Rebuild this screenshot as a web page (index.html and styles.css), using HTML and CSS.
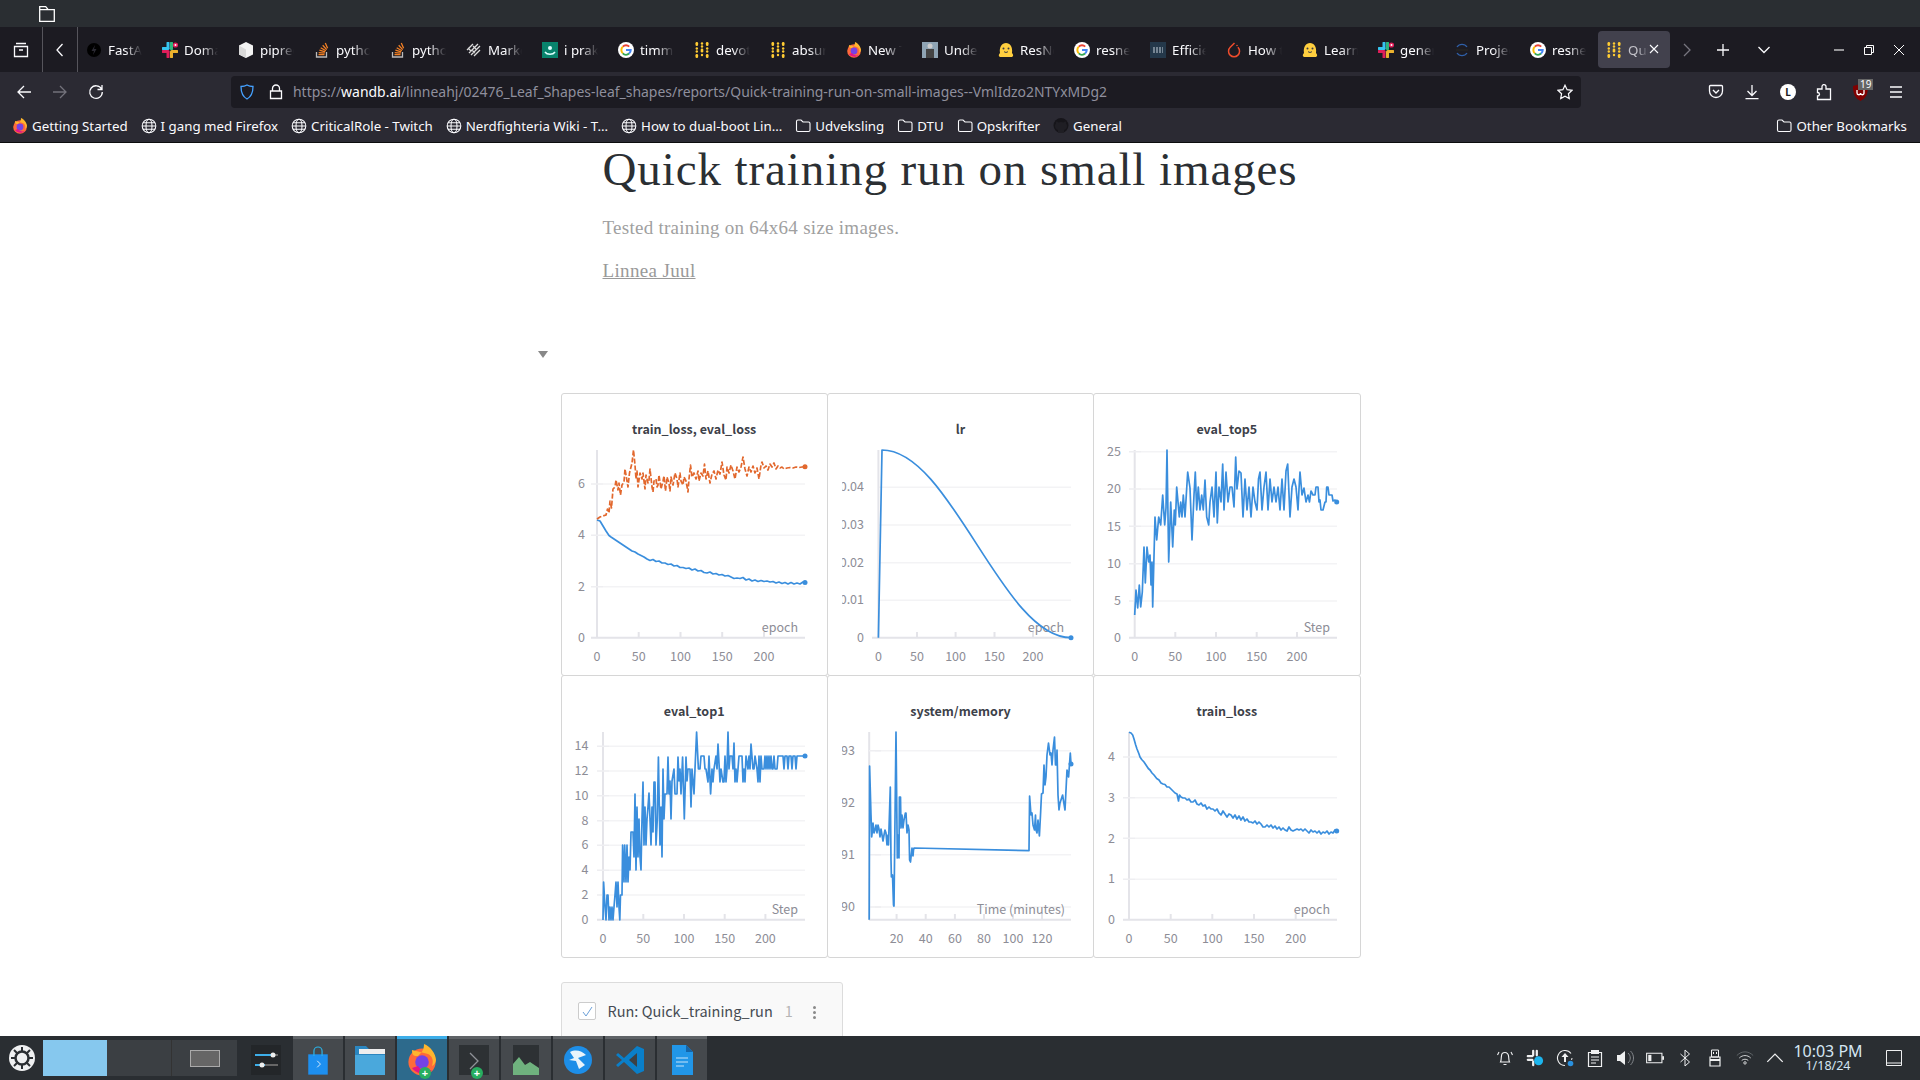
FILE: index.html

```html
<!doctype html>
<html lang="en">
<head>
  <meta charset="utf-8">
  <title>Quick training run on small images</title>
  <link rel="stylesheet" href="styles.css">
</head>
<body>

  <!-- shared favicons -->
  <svg class="defs" width="0" height="0" aria-hidden="true">
    <symbol id="i-wandb" viewBox="0 0 16 16"><g fill="#fc3"><rect x="1.5" y="0" width="2.6" height="4" rx="1.2"/><circle cx="2.8" cy="6.5" r="1.2"/><circle cx="2.8" cy="9.5" r="1.2"/><rect x="1.5" y="12" width="2.6" height="4" rx="1.2"/><circle cx="8" cy="1.5" r="1.2"/><circle cx="8" cy="4.5" r="1.2"/><rect x="6.7" y="6.5" width="2.6" height="4" rx="1.2"/><circle cx="8" cy="13" r="1.2"/><rect x="11.9" y="0" width="2.6" height="4" rx="1.2"/><circle cx="13.2" cy="6.5" r="1.2"/><circle cx="13.2" cy="9.5" r="1.2"/><rect x="11.9" y="12" width="2.6" height="4" rx="1.2"/></g></symbol>
    <symbol id="i-slack" viewBox="0 0 16 16"><path d="M1 6.5h5" stroke="#36c5f0" stroke-width="3" stroke-linecap="round"/><path d="M6 1v5" stroke="#36c5f0" stroke-width="3" stroke-linecap="round"/><path d="M9.500 1v6" stroke="#2eb67d" stroke-width="3" stroke-linecap="round"/><circle cx="13.500" cy="3" r="2.600" fill="#e01e5a"/><circle cx="13.500" cy="3" r="1" fill="#fff"/><path d="M10 9.500h5" stroke="#ecb22e" stroke-width="3" stroke-linecap="round"/><path d="M9.500 10v5" stroke="#ecb22e" stroke-width="3" stroke-linecap="round"/><path d="M6 10v5" stroke="#e01e5a" stroke-width="3" stroke-linecap="round"/><path d="M1 9.500h5" stroke="#e01e5a" stroke-width="3" stroke-linecap="round"/></symbol>
    <symbol id="i-so" viewBox="0 0 16 16"><path d="M2.500 10v5h10v-5" fill="none" stroke="#bcbbbb" stroke-width="1.300"/><path d="M4.500 12.700h6M4.700 10.600l6 .6M5.400 8.200l5.800 1.700M6.700 5.700l5.200 3M8.700 3.300l4 4.300M11.300 1l2.300 5.300" fill="none" stroke="#f48024" stroke-width="1.300"/></symbol>
    <symbol id="i-g" viewBox="0 0 16 16"><circle cx="8" cy="8" r="8" fill="#fff"/><path d="M8 3.300a4.700 4.700 0 0 1 3.200 1.300" fill="none" stroke="#ea4335" stroke-width="2"/><path d="M4.800 4.600A4.700 4.700 0 0 1 8 3.300" fill="none" stroke="#ea4335" stroke-width="2"/><path d="M4.800 4.600a4.700 4.700 0 0 0 0 6.800" fill="none" stroke="#fbbc05" stroke-width="2"/><path d="M4.800 11.400a4.700 4.700 0 0 0 6.300 .2" fill="none" stroke="#34a853" stroke-width="2"/><path d="M11.100 11.600A4.700 4.700 0 0 0 12.700 8H8" fill="none" stroke="#4285f4" stroke-width="2"/></symbol>
    <symbol id="i-fox" viewBox="0 0 16 16"><circle cx="8" cy="9" r="6.800" fill="#ff6a3a"/><path d="M3 3c0 3 1 3 3 3 2-2 3-3 3-6 3 1 6 5 6 8a4 4 0 0 1-2 3c1-3 0-5-2-6z" fill="#ffb52e"/><circle cx="8" cy="9" r="3.400" fill="#7542e5"/><path d="M3 12c2 3 7 4 10 1-3 1-6 0-7-2z" fill="#e31587"/></symbol>
    <symbol id="i-hug" viewBox="0 0 16 16"><path d="M2 15c-2-1-1-3 0-4-1-6 2-10 6-10s7 4 6 10c1 1 2 3 0 4z" fill="#ffcf3f"/><circle cx="5.500" cy="6.500" r="1" fill="#3a3b45"/><circle cx="10.500" cy="6.500" r="1" fill="#3a3b45"/><path d="M6 9.500c1 1.200 3 1.200 4 0" fill="none" stroke="#3a3b45"/></symbol>
    <symbol id="i-globe" viewBox="0 0 16 16"><g fill="none" stroke="#fbfbfe" stroke-width="1.100"><circle cx="8" cy="8" r="6.800"/><ellipse cx="8" cy="8" rx="3" ry="6.800"/><path d="M1.200 8h13.600M2 4.800h12M2 11.200h12"/></g></symbol>
    <symbol id="i-folder" viewBox="0 0 16 16"><path d="M1.500 3.500a1.500 1.500 0 0 1 1.500-1.500h3l2 2h5.500a1.500 1.500 0 0 1 1.500 1.500v6.500a1.500 1.500 0 0 1-1.500 1.500h-10.500a1.500 1.500 0 0 1-1.500-1.500z" fill="none" stroke="#fbfbfe" stroke-width="1.100"/></symbol>
  </svg>

  <!-- window title -->
  <div class="titlebar">
    <svg width="16" height="16" viewBox="0 0 16 16"><path d="M.7.700h6l2.500 3h6.100v11.600H.7zM.7 3.700h8.500" fill="none" stroke="#fff" stroke-width="1.300"/></svg>
  </div>

  <!-- tabs -->
  <div class="tabbar">
    <div class="tabbar-btn first">
      <svg width="16" height="16" viewBox="0 0 16 16"><path d="M3 1.500h10M1.500 4.500h13v10h-13zM6 8h4" fill="none" stroke="#fbfbfe" stroke-width="1.300"/></svg>
    </div>
    <div class="tabbar-btn second">
      <svg width="16" height="16" viewBox="0 0 16 16"><path d="M10.500 2 5 8l5.500 6" fill="none" stroke="#fbfbfe" stroke-width="1.300"/></svg>
    </div>
    <div class="tabs">
      <div class="tab"><svg class="fav" viewBox="0 0 16 16"><circle cx="8" cy="8" r="7" fill="#000"/><path d="M9 3 5.500 9H8l-1 4 3.500-6H8z" fill="#2b2a33"/></svg><span class="tab-label">FastAI</span></div>
      <div class="tab"><svg class="fav"><use href="#i-slack"/></svg><span class="tab-label">Domain</span></div>
      <div class="tab"><svg class="fav" viewBox="0 0 16 16"><path d="M8 0l7 3.500v9L8 16l-7-3.500v-9z" fill="#f3f3f3"/><path d="M8 7.500v8.500l-7-3.500v-9z" fill="#d9d9d9"/></svg><span class="tab-label">pipreqs</span></div>
      <div class="tab"><svg class="fav"><use href="#i-so"/></svg><span class="tab-label">python</span></div>
      <div class="tab"><svg class="fav"><use href="#i-so"/></svg><span class="tab-label">python</span></div>
      <div class="tab"><svg class="fav" viewBox="0 0 16 16"><path d="M1 8l6-6M3 11l9-9M5 13l9-9M8 14l6-6M2 6l3 3M6 8l3 3M7 4l3 3" fill="none" stroke="#ddd" stroke-width="1.300"/></svg><span class="tab-label">Markdown</span></div>
      <div class="tab"><svg class="fav" viewBox="0 0 16 16"><rect width="16" height="16" fill="#08846d"/><circle cx="8" cy="6" r="2" fill="#dff"/><path d="M3 10c2 3 8 3 10 0" fill="none" stroke="#dff" stroke-width="1.500"/></svg><span class="tab-label">i praktik</span></div>
      <div class="tab"><svg class="fav"><use href="#i-g"/></svg><span class="tab-label">timm</span></div>
      <div class="tab"><svg class="fav"><use href="#i-wandb"/></svg><span class="tab-label">devoted</span></div>
      <div class="tab"><svg class="fav"><use href="#i-wandb"/></svg><span class="tab-label">absurd</span></div>
      <div class="tab"><svg class="fav"><use href="#i-fox"/></svg><span class="tab-label">New Tab</span></div>
      <div class="tab"><svg class="fav" viewBox="0 0 16 16"><rect width="16" height="16" fill="#8fa4b4"/><rect x="4" y="7" width="8" height="9" fill="#444"/><circle cx="8" cy="4" r="2.500" fill="#ccc"/></svg><span class="tab-label">Understand</span></div>
      <div class="tab"><svg class="fav"><use href="#i-hug"/></svg><span class="tab-label">ResNet</span></div>
      <div class="tab"><svg class="fav"><use href="#i-g"/></svg><span class="tab-label">resnet</span></div>
      <div class="tab"><svg class="fav" viewBox="0 0 16 16"><rect width="16" height="16" fill="#24384a"/><path d="M3 6h10M3 8h10M3 10h10" stroke="#c5d0da" stroke-dasharray="2 1"/></svg><span class="tab-label">Efficient</span></div>
      <div class="tab"><svg class="fav" viewBox="0 0 16 16"><path d="M8.500 1 4.200 5.300a5.500 5.500 0 1 0 7.700 0" fill="none" stroke="#ee4c2c" stroke-width="1.500"/><circle cx="11" cy="3.500" r=".8" fill="#ee4c2c"/></svg><span class="tab-label">How to</span></div>
      <div class="tab"><svg class="fav"><use href="#i-hug"/></svg><span class="tab-label">Learn</span></div>
      <div class="tab"><svg class="fav"><use href="#i-slack"/></svg><span class="tab-label">general</span></div>
      <div class="tab"><svg class="fav" viewBox="0 0 16 16"><path d="M3 5a6 6 0 0 1 10 0M3 11a6 6 0 0 0 10 0" fill="none" stroke="#2f5fa8" stroke-width="1.300"/><path d="M2 8h12" stroke="#222" stroke-width="2"/></svg><span class="tab-label">Project</span></div>
      <div class="tab"><svg class="fav"><use href="#i-g"/></svg><span class="tab-label">resnet</span></div>
      <div class="tab active"><svg class="fav"><use href="#i-wandb"/></svg><span class="tab-label">Quick</span>
        <svg class="tab-close" width="10" height="10" viewBox="0 0 10 10"><path d="M1 1l8 8M9 1L1 9" stroke="#fbfbfe" stroke-width="1.100"/></svg>
      </div>
    </div>
    <div class="tab-tools">
      <svg class="tool-next" width="12" height="16" viewBox="0 0 12 16"><path d="M3 2l6 6-6 6" fill="none" stroke="#77767f" stroke-width="1.300"/></svg>
      <svg class="tool-plus" width="14" height="14" viewBox="0 0 14 14"><path d="M7 1v12M1 7h12" stroke="#fbfbfe" stroke-width="1.300"/></svg>
      <svg class="tool-list" width="14" height="10" viewBox="0 0 14 10"><path d="M1.500 2 7 7.500 12.500 2" fill="none" stroke="#fbfbfe" stroke-width="1.300"/></svg>
    </div>
    <div class="win-btns">
      <svg width="12" height="12" viewBox="0 0 12 12"><path d="M1 6h10" stroke="#fcfcfc" stroke-width="1.100"/></svg>
      <svg width="12" height="12" viewBox="0 0 12 12"><path d="M1.500 3.500h7v7h-7zM3.500 3.500v-2h7v7h-2" fill="none" stroke="#fcfcfc"/></svg>
      <svg width="12" height="12" viewBox="0 0 12 12"><path d="M1 1l10 10M11 1L1 11" stroke="#fcfcfc"/></svg>
    </div>
  </div>

  <!-- address bar -->
  <div class="navbar">
    <div class="nav-btn"><svg width="16" height="16" viewBox="0 0 16 16"><path d="M15 8H2M8 2 2 8l6 6" fill="none" stroke="#fbfbfe" stroke-width="1.300"/></svg></div>
    <div class="nav-btn"><svg width="16" height="16" viewBox="0 0 16 16"><path d="M1 8h13M8 2l6 6-6 6" fill="none" stroke="#73727b" stroke-width="1.300"/></svg></div>
    <div class="nav-btn"><svg width="16" height="16" viewBox="0 0 16 16"><path d="M13.500 5A6.300 6.300 0 1 0 14.300 8M14 1v4.500H9.500" fill="none" stroke="#fbfbfe" stroke-width="1.300"/></svg></div>
    <div class="urlbar">
      <svg width="16" height="16" viewBox="0 0 16 16"><path d="M8 1c2 1.200 4 1.500 6 1.500 0 6-1.500 10-6 12.500C3.500 12.500 2 8.500 2 2.500 4 2.500 6 2.200 8 1z" fill="none" stroke="#45a1ff" stroke-width="1.300"/></svg>
      <svg class="url-lock" width="14" height="16" viewBox="0 0 14 16"><path d="M3.500 7V4.500a3.500 3.500 0 0 1 7 0V7M1.500 7h11v7.500h-11z" fill="none" stroke="#fbfbfe" stroke-width="1.300"/></svg>
      <span class="url-text">https://<b>wandb.ai</b>/linneahj/02476_Leaf_Shapes-leaf_shapes/reports/Quick-training-run-on-small-images--VmlIdzo2NTYxMDg2</span>
      <svg class="url-star" width="16" height="16" viewBox="0 0 16 16"><path d="M8 1.200l2.100 4.500 4.900.6-3.600 3.400.9 4.900L8 12.200l-4.300 2.400.9-4.900L1 6.300l4.900-.6z" fill="none" stroke="#fbfbfe" stroke-width="1.200"/></svg>
    </div>
    <div class="nav-right">
      <div class="nav-btn"><svg width="16" height="16" viewBox="0 0 16 16"><path d="M2.500 1.500h11a1 1 0 0 1 1 1V7a6.500 6.500 0 0 1-13 0V2.500a1 1 0 0 1 1-1zM5 6l3 3 3-3" fill="none" stroke="#fbfbfe" stroke-width="1.300"/></svg></div>
      <div class="nav-btn"><svg width="16" height="16" viewBox="0 0 16 16"><path d="M8 1v10M3.500 7 8 11.500 12.500 7M1.500 14.700h13" fill="none" stroke="#fbfbfe" stroke-width="1.300"/></svg></div>
      <div class="nav-btn"><span class="avatar">L</span></div>
      <div class="nav-btn"><svg width="16" height="18" viewBox="0 0 16 18"><path d="M1.500 6h4.500V3.500a2 2 0 0 1 3.500-1.200 2 2 0 0 1 .5 1.200V6h4.500v10.500H1.500v-3.500a2 2 0 0 0 2-1.700 2 2 0 0 0-2-1.800z" fill="none" stroke="#fbfbfe" stroke-width="1.300"/></svg></div>
      <div class="nav-btn ublock">
        <svg width="15" height="17" viewBox="0 0 15 17"><path d="M7.500 0 15 2c0 8-2 12-7.500 15C2 14 0 10 0 2z" fill="#800000"/><path d="M4 6v3a1.700 1.700 0 0 0 3.500 0 1.700 1.700 0 0 0 3.500 0V6" fill="none" stroke="#fff" stroke-width="1.300"/></svg>
        <span class="badge">19</span>
      </div>
      <div class="nav-btn"><svg width="16" height="16" viewBox="0 0 16 16"><path d="M2 3h12M2 8h12M2 13h12" stroke="#fbfbfe" stroke-width="1.300"/></svg></div>
    </div>
  </div>

  <!-- bookmarks -->
  <div class="bookmarks">
    <span class="bm"><svg class="fav"><use href="#i-fox"/></svg>Getting Started</span>
    <span class="bm"><svg class="fav"><use href="#i-globe"/></svg>I gang med Firefox</span>
    <span class="bm"><svg class="fav"><use href="#i-globe"/></svg>CriticalRole - Twitch</span>
    <span class="bm"><svg class="fav"><use href="#i-globe"/></svg>Nerdfighteria Wiki - T...</span>
    <span class="bm"><svg class="fav"><use href="#i-globe"/></svg>How to dual-boot Lin...</span>
    <span class="bm"><svg class="fav"><use href="#i-folder"/></svg>Udveksling</span>
    <span class="bm"><svg class="fav"><use href="#i-folder"/></svg>DTU</span>
    <span class="bm"><svg class="fav"><use href="#i-folder"/></svg>Opskrifter</span>
    <span class="bm"><svg class="fav" viewBox="0 0 16 16"><circle cx="8" cy="7.500" r="7.500" fill="#16151a"/><path d="M5 15v-3c-2-.5-3-2-3-4 0-1 .5-2 1-2.500 0-1 0-1.500.3-2 1 0 1.700.5 2.200 1a7 7 0 0 1 5 0c.5-.5 1.200-1 2.200-1 .3.500.3 1 .3 2 .5.500 1 1.500 1 2.500 0 2-1 3.500-3 4v3z" fill="#1f1e24"/></svg>General</span>
    <span class="bm other"><svg class="fav"><use href="#i-folder"/></svg>Other Bookmarks</span>
  </div>

  <main class="page">
    <div class="report">
      <h1 class="report-title">Quick training run on small images</h1>
      <p class="report-desc">Tested training on 64x64 size images.</p>
      <a class="report-author" href="#">Linnea Juul</a>
      <div class="fold"></div>

      <div class="panels">

        <section class="panel">
          <h2>train_loss, eval_loss</h2>
          <svg class="chart" viewBox="0 0 265 230">
            <path class="grid" d="M41 41H243M41 92.300H243M41 143.700H243"/>
            <path class="axis" d="M35 7V195M29 194.700H243M76.700 189V195M118.500 189V195M160.200 189V195M202 189V195"/>
            <path class="ytick" d="M29 41H41M29 92.300H41M29 143.700H41"/>
            <g class="ylab"><text x="23" y="45">6</text><text x="23" y="96">4</text><text x="23" y="148">2</text><text x="23" y="199">0</text></g>
            <g class="xlab"><text x="35" y="218">0</text><text x="76.700" y="218">50</text><text x="118.500" y="218">100</text><text x="160.200" y="218">150</text><text x="202" y="218">200</text></g>
            <text class="axname" x="236" y="189">epoch</text>
            <polyline class="line" points="35,77 38,78 41,83 44,88 47,92.500 49,94 52,96 55,98 58,100 61,102 64,104 67,106 70,108 73,109 76,111 79,112.500 82,114 85,116 88,117.500 91,116.500 94,118.500 97,118 100,120 103,120 106,121.500 109,121 112,123 115,122.500 118,124.500 121,124.500 124,125.500 127,125 130,127 133,126 136,128 139,127.500 142,129.500 145,130 148,129 151,131 154,130.500 157,132 160,131.500 163,133 166,132.500 169,134 172,135.500 175,135 178,135.500 181,134.500 184,137 187,136 190,138 193,137 196,138.500 199,137.500 202,138.500 205,138 208,139 211,138.500 214,140 217,139 220,140.500 223,139.500 226,141 229,139.500 232,141 235,140 238,141 241,139 243,139.500"/>
            <circle class="dot" cx="243" cy="139.500" r="2.500"/>
            <polyline class="line dashed" points="35,76 38,74 41,73 44,72 45.500,66 47,70 48,58 49.500,65 51,46 53,44 54,37 56,47 57,40 58.500,52 60,42 62,39 63,26 65,38 66,44 67.500,30 69,24 70,20 71.500,7 73,22 74,36 75,28 76,44 78,30 80,36 81,30 82,38 83,46 84,32 86,40 87,37 88,26 90,44 91,49 92,38 94,36 95,44 96,42 97,32 99,46 101,38 102,33 103.500,48 105,34 107,40 108,48 109,34 111,42 113,30 115,36 116,44 118,30 119,38 121,42 122,34 124,38 126,49 127,36 128.500,22 130,34 132,30 134,36 136,28 137,38 139,30 141,33 142.500,21 144,36 146,28 148,40 150,31 152,28 154,36 156,27 158,31 160,19 162,32 164,37 165,24 167,30 169,22 171,28 173,36 175,24 177,29 179,24 181,14 183,26 185,33 187,24 189,29 191,23 193,30 195,25 197,36 199,22 200,19 202,25 204,23 206,27 208,21 210,24 212,20 214,26 216,23 218,25 220,24 222,26 225,25 228,24.500 231,25 234,24 237,24.500 240,24 243,23.700"/>
            <circle class="dot orange" cx="243" cy="23.700" r="2.500"/>
          </svg>
        </section>

        <section class="panel">
          <h2>lr</h2>
          <svg class="chart" viewBox="0 0 265 230">
            <path class="grid" d="M50 44.300H243M50 82H243M50 119.700H243M50 157.300H243"/>
            <path class="axis" d="M50.400 7V195M44 194.700H243M89 189V195M127.600 189V195M166.500 189V195M205 189V195"/>
            <g class="ylab cut"><text x="36" y="48">0.04</text><text x="36" y="86">0.03</text><text x="36" y="124">0.02</text><text x="36" y="161">0.01</text><text x="36" y="199">0</text></g>
            <g class="xlab"><text x="50.400" y="218">0</text><text x="89" y="218">50</text><text x="127.600" y="218">100</text><text x="166.500" y="218">150</text><text x="205" y="218">200</text></g>
            <text class="axname" x="236" y="189">epoch</text>
            <path class="line" d="M50.400 194.700L54 7C122.800 7 174.200 194.700 243 194.700"/>
            <circle class="dot" cx="243" cy="194.700" r="2.500"/>
          </svg>
        </section>

        <section class="panel">
          <h2>eval_top5</h2>
          <svg class="chart" viewBox="0 0 265 230">
            <path class="grid" d="M47 8.700H243M47 46H243M47 83.300H243M47 120.700H243M47 158H243"/>
            <path class="axis" d="M40.700 7V195M35 194.700H243M81.300 189V195M122 189V195M162.700 189V195M203 189V195"/>
            <path class="ytick" d="M35 8.700H47M35 46H47M35 83.300H47M35 120.700H47M35 158H47"/>
            <g class="ylab"><text x="27" y="13">25</text><text x="27" y="50">20</text><text x="27" y="88">15</text><text x="27" y="125">10</text><text x="27" y="162">5</text><text x="27" y="199">0</text></g>
            <g class="xlab"><text x="40.700" y="218">0</text><text x="81.300" y="218">50</text><text x="122" y="218">100</text><text x="162.700" y="218">150</text><text x="203" y="218">200</text></g>
            <text class="axname" x="236" y="189">Step</text>
            <polyline class="line" points="40.700,172 42,147 43.700,165 45.300,142 46.700,164 48.300,149 50,104 51.300,140 53,104 54.700,119 56,112 57,142 58,119 58.700,164 61,74 62.700,97 64.700,74 66.700,82 68.700,52 70.700,82 72,65 73,7 74.700,119 76.700,59 78.700,104 80.300,67 81.300,82 82.700,44 85.300,74 86.700,59 88,74 89.300,52 91,74 92.300,52 93.700,29 96,45 98,97 100,52 101.300,29 102.700,67 104.300,44 106,67 107.700,52 109.300,67 111,37 112.700,74 114.700,82 116,59 118,44 120,74 122,29 123.300,80 125,44 127,59 128.700,21 130,67 132,29 134,59 136,44 138,44 140,64 141.700,14 143,46 145,28 147,30 149,74 151,36 153,67 155,44 157,74 159,44 161,59 163,67 164.500,36 166,29 168,67 170,44 172,29 174,67 176,36 178,59 180,44 182,59 184,44 186,67 188,36 190,67 192,28 193.700,21 196,74 198,44 200,36 202,44 204,67 205,46 206,29 208,52 210,45 212,59 214,52 215.500,59 217,48 219,52 221,52 222,44 224,44 225,59 226,57 227,67 229,67 231,59 232,59 232.700,44 234,44 235,52 238,52 239,58 241,57 242.700,59"/>
            <circle class="dot" cx="242.700" cy="59" r="2.500"/>
          </svg>
        </section>

        <section class="panel">
          <h2>eval_top1</h2>
          <svg class="chart" viewBox="0 0 265 230">
            <path class="grid" d="M47 21.300H243M47 46H243M47 70.700H243M47 95.700H243M47 120.300H243M47 145.300H243M47 170H243"/>
            <path class="axis" d="M41 7V195M35 194.700H243M81.300 189V195M122 189V195M162.700 189V195M203.400 189V195"/>
            <path class="ytick" d="M35 21.300H47M35 46H47M35 70.700H47M35 95.700H47M35 120.300H47M35 145.300H47M35 170H47"/>
            <g class="ylab"><text x="26.500" y="25">14</text><text x="26.500" y="50">12</text><text x="26.500" y="75">10</text><text x="26.500" y="100">8</text><text x="26.500" y="124">6</text><text x="26.500" y="149">4</text><text x="26.500" y="174">2</text><text x="26.500" y="199">0</text></g>
            <g class="xlab"><text x="41" y="218">0</text><text x="81.300" y="218">50</text><text x="122" y="218">100</text><text x="162.700" y="218">150</text><text x="203.400" y="218">200</text></g>
            <text class="axname" x="236" y="189">Step</text>
            <polyline class="line" points="41,195 41.600,157 43,182 44,195 45,170 46,170 47,195 48,182 49,195 50,182 51,195 52,182 53,170 54,157 55,182 56,157 57,182 57.800,195 58.500,170 60,170 60.600,120 62,157 62.700,120 64,157 65,120 66,157 67,132 68,145 69,107 71,107 72,132 73,69 74,145 75,82 76,132 77,94 78,132 79,145 80,94 81,57 82,120 83,82 84,120 85,94 86,82 87,68 88,94 89,120 90,82 91,107 92,57 93,57 94,120 95.300,94 96.400,32 98,120 99,82 100,132 101,44 102,94 103,69 105,69 106,32 107,69 108,56 109,94 110,56 112,44 113,69 115,69 116,32 117,56 118,44 119,69 120.600,32 122.300,94 124,32 125,56 126,44 128,44 129,82 130,44 131,56 132,69 133,44 134.600,7 136.400,44 138,44 139,31 142,31 143,44 144,44 146,57 147,31 148.600,69 150,44 151,57 152,44 154,31 155,44 156,19 158,57 159,44 161,57 162,57 163,31 164,57 165,44 166,7 167,44 168,31 170,31 171,44 172,18 173,57 174,44 175,57 176,44 177,31 180,31 181,57 182,44 183,57 184,31 186,44 187,31 188,44 189,19 191,44 192,44 193,31 195,44 196,57 197,31 198,57 199,31 200,44 202,44 203,31 204,44 205,31 206,44 207,31 208,44 209,31 210,44 211,44 212,31 213,44 215,44 216,31 221,31 222,44 223,31 225,31 226,44 227,31 229,31 230,44 231,31 233,31 234,44 235,31 243,31"/>
            <circle class="dot" cx="243" cy="31" r="2.500"/>
          </svg>
        </section>

        <section class="panel">
          <h2>system/memory</h2>
          <svg class="chart" viewBox="0 0 265 230">
            <path class="grid" d="M47 25.700H243M47 77.700H243M47 129.700H243M47 182H243"/>
            <path class="axis" d="M41.200 7V195M41 194.700H243M68.600 189V195M97.700 189V195M126.900 189V195M156 189V195M185 189V195M214 189V195"/>
            <path class="ytick" d="M41 25.700H53M41 77.700H53M41 129.700H53M41 182H53"/>
            <g class="ylab cut-slight"><text x="27" y="30">93</text><text x="27" y="82">92</text><text x="27" y="134">91</text><text x="27" y="186">90</text></g>
            <g class="xlab"><text x="68.600" y="218">20</text><text x="97.700" y="218">40</text><text x="126.900" y="218">60</text><text x="156" y="218">80</text><text x="185" y="218">100</text><text x="214" y="218">120</text></g>
            <text class="axname" x="237" y="189">Time (minutes)</text>
            <polyline class="line" points="41.200,194.700 41.600,41 43,90 43.700,112 44.500,105 45,98 46,108 47,105 48,100 49,108 50,100 51,104 52,112 53,104 54,110 55,116 56,110 57,105 58,108 59,120 60,110 60.500,120 62.300,62 63,135 63.400,152 64.500,150 65.500,180 66,181 68,7 69.300,133 70,110 71,133 71.400,72 72.500,72 73,103 74,90 75,103 76,95 77.400,88 78,88 79,108 80,100 81,105 81.600,135 82.500,137 84,123 85,131 85.500,125 86,123 201,125.700 201.600,71 203,90 204,88 205,100 206.500,105 207.500,90 208,105 209,108 210,95 211.400,111 212.500,90 213.500,69 215,68 216,40 217,60 218,52 219,30 220.500,18 222,30 223,28 224,40 225,25 226.500,12 227.500,40 228.600,40 229,25 230,70 231,85 232,78 234.600,70 237,85 239,45 240.600,52 242.300,28 243,39"/>
            <circle class="dot" cx="243" cy="39" r="2.500"/>
          </svg>
        </section>

        <section class="panel">
          <h2>train_loss</h2>
          <svg class="chart" viewBox="0 0 265 230">
            <path class="grid" d="M41 32H243M41 72.700H243M41 113.300H243M41 154.300H243"/>
            <path class="axis" d="M35 7V195M29 194.700H243M76.700 189V195M118.300 189V195M160 189V195M201.700 189V195"/>
            <path class="ytick" d="M29 32H41M29 72.700H41M29 113.300H41M29 154.300H41"/>
            <g class="ylab"><text x="21" y="36">4</text><text x="21" y="77">3</text><text x="21" y="118">2</text><text x="21" y="158">1</text><text x="21" y="199">0</text></g>
            <g class="xlab"><text x="35" y="218">0</text><text x="76.700" y="218">50</text><text x="118.300" y="218">100</text><text x="160" y="218">150</text><text x="201.700" y="218">200</text></g>
            <text class="axname" x="236" y="189">epoch</text>
            <polyline class="line" points="35,7.300 37,8 38.700,10 40,14 41.700,20 43,24 45,29 46,32 47.700,34.500 50,37 52,40 54.300,43.500 56,45 58,48 60,50 62.700,53.500 65,55 67,58 69,59 71,59.500 73,62 75,62 77,64 79,66 81,68 83,69 84.500,76 85.500,70 87,72 89,73 91,73 93,75 95,74 97,77 99,77 101,75 103,79 105,80 107,78 109,81 111,80 113,84 115,82 117,84 119,84 121,86 123,84 125,88 127,90 129,86 131,89 133,92 135,89 137,90 139,93 141,90 143,94 145,91 147,95 149,92 151,96 153,94 155,97 157,97 159,98 161,96 163,99 165,97 167,99 169,102 171,102 173,100 175,102 177,100 179,103 181,101 183,104 185,102 187,105 189,103 191,105 193,106 195,102 197,105 199,106 201,105 203,104 205,105 207,104 209,106 211,104 213,106 215,108 217,105 219,107 221,106 223,108 225,106 227,109 229,107 231,108 233,106 235,109 237,107 239,108 241,105 242.700,106"/>
            <circle class="dot" cx="242.700" cy="106" r="2.500"/>
          </svg>
        </section>
      </div>

      <div class="run-card">
        <span class="run-check"><svg width="13" height="13" viewBox="0 0 13 13"><path d="M2 7l3 4 6-9" fill="none" stroke="#6a9fd8"/></svg></span>
        <span class="run-name">Run: Quick_training_run</span>
        <span class="run-count">1</span>
        <span class="run-more"><i></i><i></i><i></i></span>
      </div>
    </div>
  </main>

  <!-- desktop panel -->
  <footer class="taskbar">
    <svg class="kde" width="28" height="28" viewBox="0 0 28 28"><circle cx="14" cy="14" r="13" fill="#eff0f1"/><circle cx="14" cy="14" r="6.500" fill="none" stroke="#2a2e32" stroke-width="2.500"/><path d="M14 3v5M14 20v5M3 14h5M20 14h5M6 6l4 4M18 18l4 4M22 6l-4 4M10 18l-4 4" stroke="#2a2e32" stroke-width="2"/></svg>
    <div class="pager">
      <div class="desk on"></div>
      <div class="desk"></div>
      <div class="desk"><span class="mini-win"></span></div>
    </div>
    <div class="task plain">
      <svg width="32" height="32" viewBox="0 0 32 32"><rect x="1" y="1" width="30" height="30" fill="#232629"/><path d="M5 11h18" stroke="#3daee9" stroke-width="2"/><path d="M23 11h5M15 21h13" stroke="#666" stroke-width="2"/><path d="M5 21h10" stroke="#3daee9" stroke-width="2"/><circle cx="23" cy="11" r="2.500" fill="#eee"/><circle cx="12" cy="21" r="2.500" fill="#eee"/></svg>
    </div>
    <div class="task">
      <svg width="26" height="32" viewBox="0 0 32 36"><path d="M4 11h24v25H4z" fill="#1d8fef"/><path d="M11 13V7a5 5 0 0 1 10 0v6" fill="none" stroke="#2bb3e8" stroke-width="1.500"/><path d="M15 19l4 4-4 4" fill="none" stroke="#fff"/></svg>
    </div>
    <div class="task">
      <svg width="32" height="32" viewBox="0 0 32 32"><path d="M1 2h11l3 3h16v26H1z" fill="#2b86c0"/><rect x="5" y="5" width="26" height="5" fill="#eee"/><path d="M1 11h30v20H1z" fill="#4aa8dc"/></svg>
    </div>
    <div class="task active">
      <svg width="32" height="34" viewBox="0 0 16 17"><use href="#i-fox"/></svg>
      <span class="plus">+</span>
    </div>
    <div class="task">
      <svg width="32" height="32" viewBox="0 0 32 32"><rect x="1" y="1" width="30" height="30" fill="#2d3134"/><path d="M12 9l8 8-8 8" fill="none" stroke="#8f9398" stroke-width="1.300"/></svg>
      <span class="plus">+</span>
    </div>
    <div class="task">
      <svg width="32" height="32" viewBox="0 0 32 32"><rect x="3" y="1" width="26" height="30" fill="#2d3134"/><path d="M3 31V20l6-7 6 8 5-3 9 6v7z" fill="#6fb27e"/></svg>
    </div>
    <div class="task">
      <svg width="32" height="32" viewBox="0 0 32 32"><circle cx="16" cy="16" r="14" fill="#1d8ee8"/><path d="M8 8c6-3 12-1 16 3l-8 3 7 7-6 4-3-8-7-1 5-2z" fill="#e9f4fb"/></svg>
    </div>
    <div class="task">
      <svg width="32" height="32" viewBox="0 0 32 32"><path d="M23 2l7 3v22l-7 3-13-12-6 5-2-2 6-5-6-5 2-2 6 5z" fill="#0a7fc9"/><path d="M23 9l-8 7 8 7z" fill="#3c4044"/></svg>
    </div>
    <div class="task">
      <svg width="26" height="32" viewBox="0 0 26 32"><path d="M3 1h14l7 7v23H3z" fill="#2196e8"/><path d="M17 1l7 7h-7z" fill="#1565a8"/><path d="M7 14h12M7 18h12M7 22h8" stroke="#8ec9f2" stroke-width="1.300"/></svg>
    </div>

    <div class="tray">
      <svg width="18" height="18" viewBox="0 0 18 18"><path d="M4.500 13c1-2 .5-4 1-6a3.500 3.500 0 0 1 7 0c.5 2 0 4 1 6zM7.500 15.500h3M1.500 6l1.500-3M16.500 6l-1.500-3" fill="none" stroke="#eff0f1" stroke-width="1.100"/></svg>
      <svg width="18" height="18" viewBox="0 0 20 20"><path d="M2 8h5M2 12h5M8 2v5M12 2v5M8 14v4" stroke="#eff0f1" stroke-width="2.500" stroke-linecap="round"/><circle cx="14" cy="13" r="5" fill="#1cb5ee"/></svg>
      <svg width="18" height="18" viewBox="0 0 18 18"><path d="M15 4.500A7.500 7.500 0 1 0 9 16.500" fill="none" stroke="#eff0f1" stroke-width="1.100"/><path d="M16 9a7 7 0 0 1-.5 2" fill="none" stroke="#eff0f1"/><path d="M9 4L5.500 8H8v5h2V8h2.500z" fill="#eff0f1"/><circle cx="14.500" cy="14.500" r="2.800" fill="#2a90de"/></svg>
      <svg width="18" height="18" viewBox="0 0 16 18"><path d="M1.500 3.500h13v14h-13z" fill="none" stroke="#eff0f1" stroke-width="1.200"/><path d="M4 1h8v4H4z" fill="#eff0f1"/><path d="M4 8h8M4 11h8M4 14h5" stroke="#eff0f1"/></svg>
      <svg width="18" height="18" viewBox="0 0 18 18"><path d="M1 6h3l5-4v14l-5-4H1z" fill="#eff0f1"/><path d="M12 4c3 3 3 7 0 10M14.500 2c4 4 4 10 0 14" fill="none" stroke="#83878c"/></svg>
      <svg width="18" height="18" viewBox="0 0 20 14"><path d="M.7 1.700h17v10.600H.7z" fill="none" stroke="#eff0f1" stroke-width="1.200"/><rect x="2.500" y="3.500" width="3.500" height="7" fill="#eff0f1"/><rect x="18" y="5" width="2" height="4" fill="#eff0f1"/></svg>
      <svg width="18" height="18" viewBox="0 0 12 18"><path d="M1.500 5l9 8-4.500 4V1l4.500 4-9 8" fill="none" stroke="#eff0f1"/></svg>
      <svg width="18" height="18" viewBox="0 0 12 18"><path d="M2.500 1h7v7h-7z" fill="none" stroke="#eff0f1"/><path d="M4.500 3v2M7.500 3v2" stroke="#eff0f1"/><path d="M1 8h10v9H1z" fill="none" stroke="#eff0f1" stroke-width="1.200"/><path d="M1 11h10" stroke="#eff0f1" stroke-width="2"/></svg>
      <svg width="18" height="18" viewBox="0 0 22 18"><path d="M1 6c6-6 14-6 20 0" fill="none" stroke="#6b6f73"/><path d="M4 9c4-4 10-4 14 0M7 12c2-2 6-2 8 0" fill="none" stroke="#eff0f1"/><circle cx="11" cy="15" r="1.500" fill="none" stroke="#eff0f1"/></svg>
      <svg width="18" height="18" viewBox="0 0 14 14"><path d="M1 10l6-6 6 6" fill="none" stroke="#eff0f1"/></svg>
    </div>
    <div class="clock">
      <span class="clock-time">10:03 PM</span>
      <span class="clock-date">1/18/24</span>
    </div>
    <svg class="show-desktop" width="16" height="16" viewBox="0 0 16 16"><path d="M.5.500h15v15H.5zM.5 13h15" fill="none" stroke="#eff0f1"/></svg>
  </footer>

</body>
</html>
```

FILE: styles.css

```css
/* ===== Tokens ===== */
:root{
  --chrome:#2b2a33; --tabs:#1c1b22; --plasma:#2a2e32;
  --ui-text:#fbfbfe;
  --ui-font:"Noto Sans",sans-serif;
  --wb-font:"Noto Sans CJK SC","Noto Sans",sans-serif;
  --doc-font:"Liberation Serif",serif;
  --blue:#3a8edd; --orange:#e2682e;
}
*{ box-sizing:border-box }
html,body{ height:100% }
body{ margin:0; height:100vh; display:flex; flex-direction:column; overflow:hidden; background:#fff; font-family:var(--ui-font); }
.defs{ position:absolute }
svg{ display:block; flex:none }

/* ===== Window title ===== */
.titlebar{ height:27px; flex:none; background:var(--plasma); padding:6px 0 0 39px; }

/* ===== Tabs ===== */
.tabbar{ height:45px; flex:none; display:flex; align-items:center; background:var(--tabs); color:var(--ui-text); }
.tabbar-btn{ height:45px; display:flex; align-items:center; justify-content:center; border-right:1px solid #56555c; }
.tabbar-btn.first{ width:43px }
.tabbar-btn.second{ width:35px }
.tabs{ display:flex; margin-left:-2px }
.tab{ width:72px; height:37px; margin:0 2px; padding-left:8px; display:flex; align-items:center; gap:6px; border-radius:4px; font-size:13.300px; overflow:hidden; position:relative; }
.tab.active{ background:#42414d }
.tab.active .tab-label{ width:20px; color:#c4c3ca }
.tab-label{ width:34px; white-space:nowrap; overflow:hidden; -webkit-mask-image:linear-gradient(to right,#000 50%,transparent); mask-image:linear-gradient(to right,#000 50%,transparent); }
.fav{ width:16px; height:16px; flex:none }
.tab-close{ position:absolute; right:11px; top:13px }
.tab-tools{ display:flex; align-items:center; padding-left:9px; }
.tool-plus{ margin-left:23px }
.tool-list{ margin-left:27px }
.win-btns{ margin-left:auto; padding-right:15px; display:flex; align-items:center; gap:18px; }

/* ===== Address bar ===== */
.navbar{ height:36px; flex:none; padding:4px 0 0 6px; display:flex; align-items:center; background:var(--chrome); color:var(--ui-text); }
.nav-btn{ width:36px; height:32px; display:flex; align-items:center; justify-content:center; position:relative; }
.urlbar{ width:1350px; height:32px; margin-left:117px; padding:0 8px; display:flex; align-items:center; background:var(--tabs); border-radius:4px; }
.url-lock{ margin-left:14px }
.url-text{ margin:0 0 2px 10px; font-size:13.960px; color:#8f8f9d; white-space:nowrap; }
.url-text b{ font-weight:400; color:#fbfbfe }
.url-star{ margin-left:auto }
.nav-right{ margin-left:117px; display:flex; }
.avatar{ width:16px; height:16px; border-radius:50%; background:#fff; color:#1c1b22; font-size:10px; font-weight:700; line-height:16px; text-align:center; }
.badge{ position:absolute; top:3px; left:16px; height:11px; padding:0 2px; background:#666; color:#fff; font-size:10px; line-height:11px; }

/* ===== Bookmarks ===== */
.bookmarks{ height:35px; flex:none; padding:2px 0 0 12px; display:flex; align-items:center; gap:13px; background:var(--chrome); border-bottom:1px solid #0c0c0d; color:var(--ui-text); font-size:13.300px; white-space:nowrap; }
.bm{ display:flex; align-items:center; gap:4px }
.bm.other{ margin-left:auto; padding-right:13px }

/* ===== Report page ===== */
.page{ flex:1; min-height:0; overflow:hidden; background:#fff; }
.report{ width:799px; margin:0 auto; }
.report-title{ margin:0 0 0 42px; padding-top:1px; height:50px; font:400 47px/50px var(--doc-font); letter-spacing:.9px; color:#2b2f33; white-space:nowrap; }
.report-desc{ margin:23px 0 0 42px; font:400 19px/24px var(--doc-font); letter-spacing:.27px; color:#a0a0a0; }
.report-author{ display:block; width:fit-content; margin:19px 0 0 42px; font:400 19px/24px var(--doc-font); letter-spacing:.35px; color:#999; }
.fold{ width:0; height:0; margin:68px 0 0 -23px; border:5px solid transparent; border-top:7px solid #888; border-bottom:0; }
.panels{ margin-top:35px; display:grid; grid-template-columns:repeat(3,1fr); grid-auto-rows:282px; }
.panel{ border:1px solid #d6d6d6; margin-right:-1px; margin-bottom:-1px; border-radius:3px; background:#fff; }
.panel h2{ margin:0; padding-top:25px; height:49px; text-align:center; font:600 12.500px/20px var(--wb-font); color:#3d4149; }
.chart{ width:265px; height:230px; }
.chart text{ font:12.500px var(--wb-font); fill:#8d8d96; }
.grid{ stroke:#f3f3f5; stroke-width:1.500; fill:none }
.axis{ stroke:#e4e4e9; stroke-width:2; fill:none }
.ytick{ stroke:#eeeef1; stroke-width:1.500; fill:none }
.ylab text{ text-anchor:end }
.ylab.cut{ clip-path:inset(0 0 0 2.500px) }
.ylab.cut-slight{ clip-path:inset(0 0 0 1px) }
.xlab text{ text-anchor:middle }
.axname{ text-anchor:end }
.line{ fill:none; stroke:var(--blue); stroke-width:1.700; stroke-linejoin:round }
.line.dashed{ stroke:var(--orange); stroke-dasharray:5 2 }
.dot{ fill:var(--blue) }
.dot.orange{ fill:var(--orange) }

/* ===== Run card ===== */
.run-card{ width:282px; height:80px; margin-top:25px; padding:17px 0 0 16px; display:flex; align-items:flex-start; background:#f9f9f9; border:1px solid #dcdcdc; border-radius:3px; font:14.500px/22px var(--wb-font); color:#454b52; }
.run-check{ width:18px; height:18px; margin-top:2px; padding:2px; background:#fff; border:1px solid #ccc; border-radius:2px; }
.run-name{ margin-left:12px }
.run-count{ margin-left:12px; color:#b5b5b5 }
.run-more{ margin:6px 0 0 20px; display:flex; flex-direction:column; gap:2px; }
.run-more i{ width:3px; height:3px; border-radius:50%; background:#8a8a8a; }

/* ===== Desktop panel ===== */
.taskbar{ height:44px; flex:none; display:flex; align-items:center; background:var(--plasma); padding-left:8px; color:#eff0f1; }
.pager{ width:194px; height:36px; margin-left:7px; display:flex; background:#3b3f43; }
.desk{ width:65px; border-right:1px solid #333; display:flex; align-items:center; justify-content:center; }
.desk.on{ width:64px; background:#86c8ee; border:0; }
.desk:last-child{ border:0 }
.mini-win{ width:30px; height:17px; background:#666; border:1px solid #aaa; }
.task{ width:50px; height:44px; margin-right:2px; background:#45494d; border-top:3px solid #5f6367; display:flex; align-items:center; justify-content:center; position:relative; }
.task.plain{ width:51px; background:transparent; border-top-color:transparent; margin-left:3px; }
.task.active{ background:#2d6a8c; border-top-color:#3daee9; }
.plus{ position:absolute; bottom:1px; left:50%; width:12px; height:12px; margin-left:-3px; border-radius:50%; background:#27ae60; color:#fff; font-size:11px; font-weight:700; line-height:11px; text-align:center; }
.tray{ margin-left:auto; display:flex; align-items:center; }
.tray svg{ margin:0 6px }
.clock{ width:76px; display:flex; flex-direction:column; align-items:center; }
.clock-time{ font-size:16px; line-height:16px; color:#d5e6f3 }
.clock-date{ font-size:12.500px; line-height:14px; color:#d5e6f3 }
.show-desktop{ margin:0 18px 0 20px }
```
